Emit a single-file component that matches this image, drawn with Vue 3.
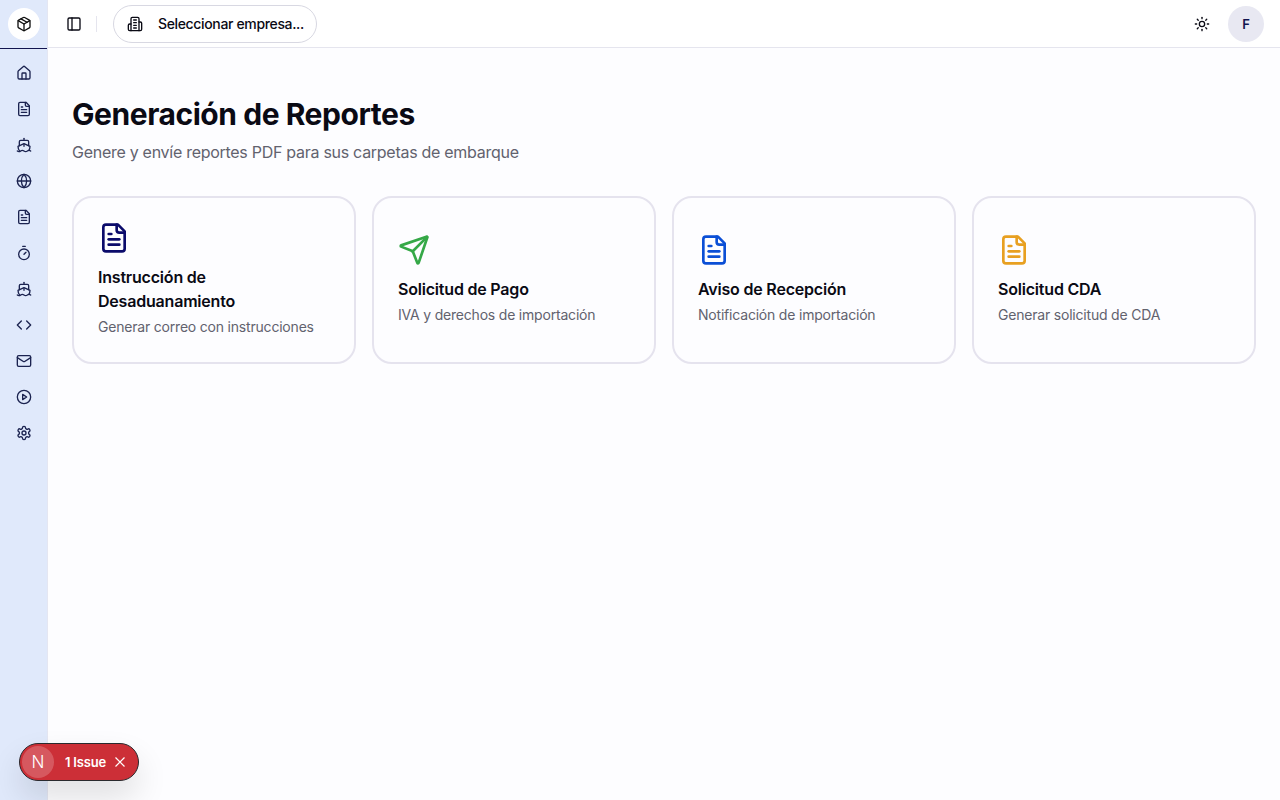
<script setup>
const nav = ['house', 'file', 'ship', 'globe', 'file', 'timer', 'ship', 'code', 'mail', 'play', 'settings']
const cards = [
  { title: 'Instrucción de Desaduanamiento', desc: 'Generar correo con instrucciones', icon: 'file', color: '#0b0b6b' },
  { title: 'Solicitud de Pago', desc: 'IVA y derechos de importación', icon: 'send', color: '#35a847' },
  { title: 'Aviso de Recepción', desc: 'Notificación de importación', icon: 'file', color: '#0b4fd6' },
  { title: 'Solicitud CDA', desc: 'Generar solicitud de CDA', icon: 'file', color: '#e8a021' },
]
</script>

<template>
  <svg width="0" height="0" class="defs">
    <symbol id="i-package" viewBox="0 0 24 24"><path d="M11 21.73a2 2 0 0 0 2 0l7-4A2 2 0 0 0 21 16V8a2 2 0 0 0-1-1.73l-7-4a2 2 0 0 0-2 0l-7 4A2 2 0 0 0 3 8v8a2 2 0 0 0 1 1.73z"/><path d="M12 22V12"/><polyline points="3.29 7 12 12 20.71 7"/><path d="m7.5 4.27 9 5.15"/></symbol>
    <symbol id="i-panel" viewBox="0 0 24 24"><rect x="3" y="3" width="18" height="18" rx="2"/><path d="M9 3v18"/></symbol>
    <symbol id="i-building" viewBox="0 0 24 24"><path d="M6 22V4a2 2 0 0 1 2-2h8a2 2 0 0 1 2 2v18Z"/><path d="M6 12H4a2 2 0 0 0-2 2v6a2 2 0 0 0 2 2h2"/><path d="M18 9h2a2 2 0 0 1 2 2v9a2 2 0 0 1-2 2h-2"/><path d="M10 6h4"/><path d="M10 10h4"/><path d="M10 14h4"/><path d="M10 18h4"/></symbol>
    <symbol id="i-house" viewBox="0 0 24 24"><path d="M15 21v-8a1 1 0 0 0-1-1h-4a1 1 0 0 0-1 1v8"/><path d="M3 10a2 2 0 0 1 .709-1.528l7-5.999a2 2 0 0 1 2.582 0l7 5.999A2 2 0 0 1 21 10v9a2 2 0 0 1-2 2H5a2 2 0 0 1-2-2z"/></symbol>
    <symbol id="i-file" viewBox="0 0 24 24"><path d="M15 2H6a2 2 0 0 0-2 2v16a2 2 0 0 0 2 2h12a2 2 0 0 0 2-2V7Z"/><path d="M14 2v4a2 2 0 0 0 2 2h4"/><path d="M10 9H8"/><path d="M16 13H8"/><path d="M16 17H8"/></symbol>
    <symbol id="i-ship" viewBox="0 0 24 24"><path d="M12 10.189V14"/><path d="M12 2v3"/><path d="M19 13V7a2 2 0 0 0-2-2H7a2 2 0 0 0-2 2v6"/><path d="M19.38 20A11.6 11.6 0 0 0 21 14l-8.188-3.639a2 2 0 0 0-1.624 0L3 14a11.6 11.6 0 0 0 2.81 7.76"/><path d="M2 21c.6.5 1.2 1 2.5 1 2.5 0 2.5-2 5-2 1.3 0 1.9.5 2.5 1s1.2 1 2.5 1c2.5 0 2.5-2 5-2 1.3 0 1.9.5 2.5 1"/></symbol>
    <symbol id="i-globe" viewBox="0 0 24 24"><circle cx="12" cy="12" r="10"/><path d="M12 2a14.5 14.5 0 0 0 0 20 14.5 14.5 0 0 0 0-20"/><path d="M2 12h20"/></symbol>
    <symbol id="i-timer" viewBox="0 0 24 24"><line x1="10" x2="14" y1="2" y2="2"/><line x1="12" x2="15" y1="14" y2="11"/><circle cx="12" cy="14" r="8"/></symbol>
    <symbol id="i-code" viewBox="0 0 24 24"><polyline points="16 18 22 12 16 6"/><polyline points="8 6 2 12 8 18"/></symbol>
    <symbol id="i-mail" viewBox="0 0 24 24"><path d="m22 7-8.991 5.727a2 2 0 0 1-2.009 0L2 7"/><rect x="2" y="4" width="20" height="16" rx="2"/></symbol>
    <symbol id="i-play" viewBox="0 0 24 24"><circle cx="12" cy="12" r="10"/><polygon points="10 8 16 12 10 16 10 8"/></symbol>
    <symbol id="i-settings" viewBox="0 0 24 24"><path d="M12.22 2h-.44a2 2 0 0 0-2 2v.18a2 2 0 0 1-1 1.73l-.43.25a2 2 0 0 1-2 0l-.15-.08a2 2 0 0 0-2.73.73l-.22.38a2 2 0 0 0 .73 2.73l.15.1a2 2 0 0 1 1 1.72v.51a2 2 0 0 1-1 1.74l-.15.09a2 2 0 0 0-.73 2.73l.22.38a2 2 0 0 0 2.73.73l.15-.08a2 2 0 0 1 2 0l.43.25a2 2 0 0 1 1 1.73V20a2 2 0 0 0 2 2h.44a2 2 0 0 0 2-2v-.18a2 2 0 0 1 1-1.73l.43-.25a2 2 0 0 1 2 0l.15.08a2 2 0 0 0 2.73-.73l.22-.39a2 2 0 0 0-.73-2.73l-.15-.08a2 2 0 0 1-1-1.74v-.5a2 2 0 0 1 1-1.74l.15-.09a2 2 0 0 0 .73-2.73l-.22-.38a2 2 0 0 0-2.73-.73l-.15.08a2 2 0 0 1-2 0l-.43-.25a2 2 0 0 1-1-1.73V4a2 2 0 0 0-2-2z"/><circle cx="12" cy="12" r="3"/></symbol>
    <symbol id="i-sun" viewBox="0 0 24 24"><circle cx="12" cy="12" r="4"/><path d="M12 2v2"/><path d="M12 20v2"/><path d="m4.93 4.93 1.41 1.41"/><path d="m17.66 17.66 1.41 1.41"/><path d="M2 12h2"/><path d="M20 12h2"/><path d="m6.34 17.66-1.41 1.41"/><path d="m19.07 4.93-1.41 1.41"/></symbol>
    <symbol id="i-send" viewBox="0 0 24 24"><path d="M14.536 21.686a.5.5 0 0 0 .937-.024l6.5-19a.496.496 0 0 0-.635-.635l-19 6.5a.5.5 0 0 0-.024.937l7.93 3.18a2 2 0 0 1 1.112 1.11z"/><path d="m21.854 2.147-10.94 10.939"/></symbol>
  </svg>

  <div class="app">
    <aside class="sidebar">
      <div class="brand">
        <span class="logo"><svg class="ic16"><use href="#i-package" /></svg></span>
      </div>
      <nav class="nav">
        <a v-for="(n, i) in nav" :key="i" class="nav-item"><svg class="ic16"><use :href="'#i-' + n" /></svg></a>
      </nav>
    </aside>
    <div class="body">
      <header class="topbar">
        <div class="top-left">
          <button class="icon-btn"><svg class="ic16"><use href="#i-panel" /></svg></button>
          <span class="sep"></span>
          <button class="company"><svg class="ic16"><use href="#i-building" /></svg><span>Seleccionar empresa...</span></button>
        </div>
        <div class="top-right">
          <button class="icon-btn"><svg class="ic16"><use href="#i-sun" /></svg></button>
          <span class="avatar">F</span>
        </div>
      </header>
      <main class="main">
        <h1>Generación de Reportes</h1>
        <p class="sub">Genere y envíe reportes PDF para sus carpetas de embarque</p>
        <section class="cards">
          <article v-for="c in cards" :key="c.title" class="card">
            <svg class="ic32" :style="{ color: c.color }"><use :href="'#i-' + c.icon" /></svg>
            <h2>{{ c.title }}</h2>
            <p>{{ c.desc }}</p>
          </article>
        </section>
      </main>
    </div>
    <div class="issue">
      <span class="n">N</span>
      <span class="count">1 Issue</span>
      <svg class="x" viewBox="0 0 12 12"><path d="M1.5 1.5l9 9M10.5 1.5l-9 9" /></svg>
    </div>
  </div>
</template>

<style>
html, body { margin: 0; }
</style>

<style scoped>
.defs { position: absolute; }
symbol, svg { fill: none; }
.defs * { fill: none; stroke: currentColor; stroke-width: 2; stroke-linecap: round; stroke-linejoin: round; }
.app { display: flex; width: 1280px; height: 800px; overflow: hidden; font-family: Inter, "Liberation Sans", sans-serif; color: #0a0a14; background: #fdfdff; }
.ic16 { width: 16px; height: 16px; display: block; flex: none; }
.ic32 { width: 32px; height: 32px; display: block; flex: none; }
.sidebar { width: 48px; flex: none; background: #e0e9fb; border-right: 1px solid #e4e6f2; box-sizing: border-box; color: #1b2350; }
.brand { height: 49px; box-sizing: border-box; border-bottom: 1px solid #12144f; display: flex; align-items: center; justify-content: center; }
.logo { width: 32px; height: 32px; border-radius: 50%; background: #fff; display: flex; align-items: center; justify-content: center; color: #111; }
.nav { display: flex; flex-direction: column; align-items: center; gap: 4px; padding-top: 8px; }
.nav-item { width: 32px; height: 32px; display: flex; align-items: center; justify-content: center; }
.body { flex: 1; min-width: 0; display: flex; flex-direction: column; }
.topbar { height: 48px; box-sizing: border-box; border-bottom: 1px solid #e5e5ee; background: #fff; display: flex; align-items: center; justify-content: space-between; padding: 0 16px 0 10px; }
.top-left, .top-right { display: flex; align-items: center; }
.icon-btn { width: 32px; height: 32px; padding: 0; border: 0; background: none; color: #0a0a14; display: flex; align-items: center; justify-content: center; }
.sep { width: 1px; height: 16px; background: #e5e5ee; margin: 0 16px 0 6px; }
.company { height: 38px; width: 204px; box-sizing: border-box; border: 1px solid #d8d8e2; border-radius: 19px; background: #fff; display: flex; align-items: center; padding: 0 11px 0 13px; gap: 15px; font: 500 14px Inter, sans-serif; letter-spacing: -0.35px; color: #0a0a14; white-space: nowrap; }
.top-right { gap: 10px; }
.avatar { width: 36px; height: 36px; border-radius: 50%; background: #e8e8f2; display: flex; align-items: center; justify-content: center; color: #12144f; font-size: 13px; font-weight: 600; }
.main { flex: 1; padding: 48px 24px 24px; }
h1 { margin: 0; font-size: 30px; line-height: 36px; font-weight: 700; letter-spacing: -0.45px; }
.sub { margin: 8px 0 0; font-size: 16px; line-height: 24px; color: #62626e; letter-spacing: -0.28px; }
.cards { display: grid; grid-template-columns: repeat(4, 1fr); gap: 16px; margin-top: 32px; }
.card { height: 168px; box-sizing: border-box; border: 2px solid #e5e3ee; border-radius: 20px; background: #fdfdff; padding: 24px 24px 25px; display: flex; flex-direction: column; justify-content: center; }
.card h2 { margin: 11px 0 0; font-size: 16px; line-height: 24px; font-weight: 600; letter-spacing: -0.2px; }
.card p { margin: 4px 0 0; font-size: 14px; line-height: 20px; color: #62626e; letter-spacing: -0.2px; }
.issue { position: absolute; left: 19px; top: 743px; width: 120px; height: 38px; box-sizing: border-box; border-radius: 19px; background: #cc2f37; border: 1px solid #2a2a2e; box-shadow: 0 16px 32px rgba(0,0,0,.12); display: flex; align-items: center; padding-left: 2px; color: #fff; }
.n { width: 32px; height: 32px; border-radius: 50%; background: rgba(255,255,255,.2); display: flex; align-items: center; justify-content: center; font-size: 17px; font-weight: 300; margin-right: 1px; }
.count { margin-left: 10px; font-size: 13px; font-weight: 600; letter-spacing: -0.2px; white-space: nowrap; }
.x { width: 12px; height: 12px; margin-left: 8px; stroke: #fff; stroke-width: 1.2; }
</style>
